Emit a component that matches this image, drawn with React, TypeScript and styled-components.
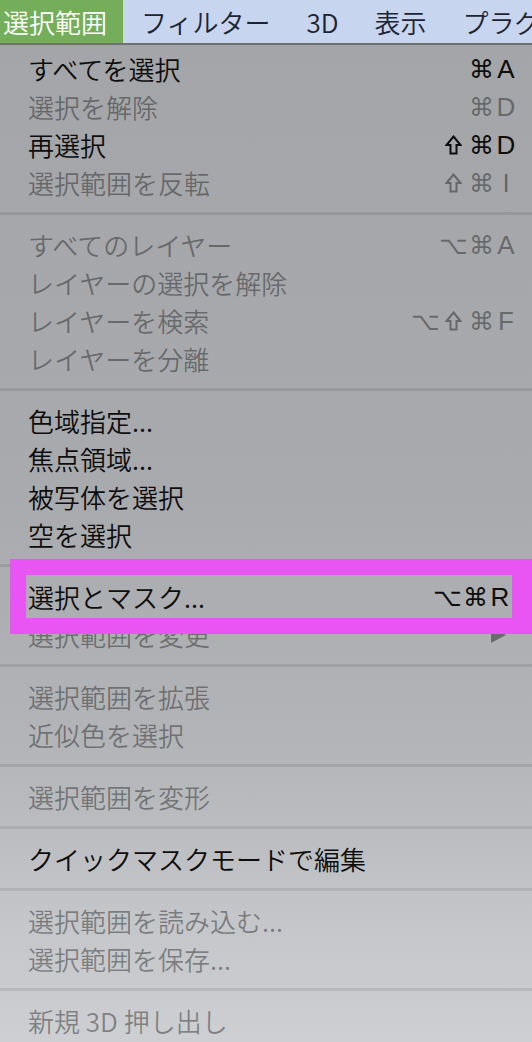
import * as React from 'react';
import styled, { createGlobalStyle } from 'styled-components';

type Item = {
  label: string;
  disabled?: boolean;
  keys?: string[];
  submenu?: boolean;
  inset?: boolean;
};

const groups: Item[][] = [
  [
    { label: 'すべてを選択', keys: ['⌘', 'A'] },
    { label: '選択を解除', disabled: true, keys: ['⌘', 'D'] },
    { label: '再選択', keys: ['⇧', '⌘', 'D'] },
    { label: '選択範囲を反転', disabled: true, keys: ['⇧', '⌘', 'I'] },
  ],
  [
    { label: 'すべてのレイヤー', disabled: true, keys: ['⌥', '⌘', 'A'] },
    { label: 'レイヤーの選択を解除', disabled: true },
    { label: 'レイヤーを検索', disabled: true, keys: ['⌥', '⇧', '⌘', 'F'] },
    { label: 'レイヤーを分離', disabled: true },
  ],
  [
    { label: '色域指定...' },
    { label: '焦点領域...' },
    { label: '被写体を選択' },
    { label: '空を選択' },
  ],
  [
    { label: '選択とマスク...', keys: ['⌥', '⌘', 'R'], inset: true },
    { label: '選択範囲を変更', disabled: true, submenu: true },
  ],
  [
    { label: '選択範囲を拡張', disabled: true },
    { label: '近似色を選択', disabled: true },
  ],
  [{ label: '選択範囲を変形', disabled: true }],
  [{ label: 'クイックマスクモードで編集' }],
  [
    { label: '選択範囲を読み込む...', disabled: true },
    { label: '選択範囲を保存...', disabled: true },
  ],
  [{ label: '新規 3D 押し出し', disabled: true }],
];

const titles = ['選択範囲', 'フィルター', '3D', '表示', 'プラグ'];

const JP = `"Noto Sans CJK JP", "Noto Sans", sans-serif`;
const DIM = 'rgba(0, 0, 0, 0.39)';

const GlobalStyle = createGlobalStyle`
  html, body {
    margin: 0;
    padding: 0;
    background: #a5a7aa;
  }
`;

const Screen = styled.div`
  position: relative;
  width: 532px;
  height: 1042px;
  overflow: hidden;
  display: flex;
  flex-direction: column;
  font-family: ${JP};
  font-weight: 350;
`;

const MenuBar = styled.div`
  display: flex;
  height: 43px;
  flex-shrink: 0;
  background: #c7d6ee;
  border-bottom: 2px solid #6e7073;
  white-space: nowrap;
`;

const MenuTitle = styled.div<{ $active?: boolean }>`
  display: flex;
  align-items: center;
  padding: ${({ $active }) => ($active ? '0 16px 0 3px' : '0 18px')};
  background: ${({ $active }) => ($active ? '#75ae5a' : 'transparent')};
  color: ${({ $active }) => ($active ? '#ffffff' : '#1c2434')};
  font-size: 26px;
  line-height: 1;
`;

const Dropdown = styled.div`
  flex: 1;
  display: flex;
  flex-direction: column;
  padding-top: 5px;
  background: linear-gradient(#a3a5a8 0%, #a8aaad 45%, #b2b4b7 70%, #c4c6c9 88%, #cdcfd2 100%);
`;

const Separator = styled.div`
  height: 3px;
  margin: 10px 0 11px;
  background: rgba(0, 0, 0, 0.09);
`;

const Row = styled.div`
  display: flex;
  align-items: center;
  justify-content: space-between;
  height: 38px;
  padding: 0 15px 0 28px;
`;

const Label = styled.span<{ $disabled?: boolean }>`
  font-size: 26px;
  line-height: 1;
  color: ${({ $disabled }) => ($disabled ? DIM : '#0d0d0d')};
`;

const Shortcut = styled.span<{ $disabled?: boolean; $inset?: boolean }>`
  display: flex;
  align-items: center;
  margin-right: ${({ $inset }) => ($inset ? '6px' : '0')};
  color: ${({ $disabled }) => ($disabled ? DIM : '#0d0d0d')};
`;

const ModKey = styled.span`
  display: flex;
  justify-content: center;
  width: 28px;
  font-family: "DejaVu Sans", sans-serif;
  font-size: 25px;
  line-height: 1;
`;

const LetterKey = styled.span`
  width: 22px;
  text-align: center;
  font-family: "Liberation Sans", Arial, sans-serif;
  font-size: 26px;
  line-height: 1;
`;

const ShiftIcon = styled.svg`
  width: 17px;
  height: 20px;
  fill: none;
  stroke: currentColor;
  stroke-width: 2;
  stroke-linejoin: miter;
`;

const SubArrow = styled.svg`
  width: 17px;
  height: 18px;
  margin-right: 10px;
  fill: ${DIM};
`;

const Callout = styled.div`
  position: absolute;
  left: 10px;
  right: 0;
  top: 559px;
  height: 75px;
  box-sizing: border-box;
  border: 16px solid #e955f2;
  border-right-width: 20px;
  pointer-events: none;
`;

const Key = ({ k }: { k: string }) =>
  k === '⇧' ? (
    <ModKey>
      <ShiftIcon viewBox="0 0 17 20">
        <path d="M8.5 1.5 L15.5 10 L11.5 10 L11.5 18.5 L5.5 18.5 L5.5 10 L1.5 10 Z" />
      </ShiftIcon>
    </ModKey>
  ) : (
    <ModKey>{k}</ModKey>
  );

export default function App() {
  return (
    <Screen>
      <GlobalStyle />
      <MenuBar>
        {titles.map((t, i) => (
          <MenuTitle key={t} $active={i === 0}>
            {t}
          </MenuTitle>
        ))}
      </MenuBar>
      <Dropdown>
        {groups.map((group, gi) => (
          <React.Fragment key={gi}>
            {gi > 0 && <Separator />}
            {group.map(item => (
              <Row key={item.label}>
                <Label $disabled={item.disabled}>{item.label}</Label>
                {item.keys && (
                  <Shortcut $disabled={item.disabled} $inset={item.inset}>
                    {item.keys.map((k, ki) =>
                      ki === item.keys!.length - 1 ? (
                        <LetterKey key={ki}>{k}</LetterKey>
                      ) : (
                        <Key key={ki} k={k} />
                      )
                    )}
                  </Shortcut>
                )}
                {item.submenu && (
                  <SubArrow viewBox="0 0 17 18">
                    <path d="M1 1 L16 9 L1 17 Z" />
                  </SubArrow>
                )}
              </Row>
            ))}
          </React.Fragment>
        ))}
      </Dropdown>
      <Callout />
    </Screen>
  );
}
